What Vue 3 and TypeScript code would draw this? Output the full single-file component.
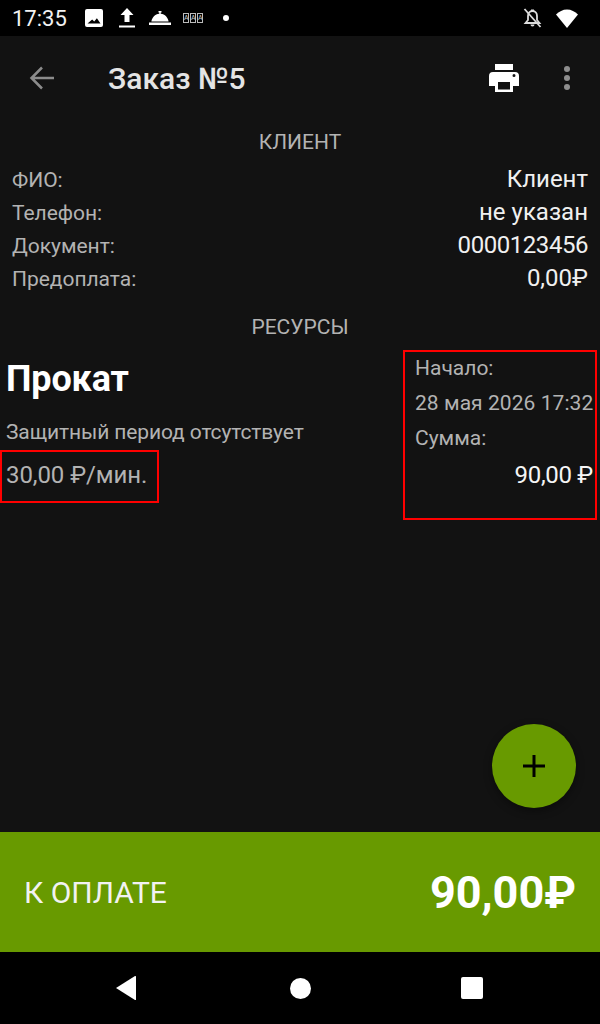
<script setup lang="ts">
const rows = [
  { label: 'ФИО:', value: 'Клиент', tight: false },
  { label: 'Телефон:', value: 'не указан', tight: false },
  { label: 'Документ:', value: '0000123456', tight: true },
  { label: 'Предоплата:', value: '0,00₽', tight: false },
]
</script>

<template>
  <div class="screen">
    <header class="status">
      <span class="clock">17:35</span>
      <div class="notif">
        <svg class="ic-img" width="18" height="18" viewBox="0 0 18 18"><path fill="#fff" fill-rule="evenodd" d="M2 0h14a2 2 0 0 1 2 2v14a2 2 0 0 1-2 2H2a2 2 0 0 1-2-2V2a2 2 0 0 1 2-2zM2.500 14.500h13l-3.600-5.200-2.700 3.300-2-2.200z"/></svg>
        <svg class="ic-up" width="16" height="20" viewBox="0 0 16 20"><path fill="#fff" d="M8 0l6.500 7H10.500v7h-5V7H1.500zM0 17.500h16v2H0z"/></svg>
        <svg class="ic-bell" width="22" height="14" viewBox="0 0 22 14"><path fill="#fff" d="M9.500 0h3v1.500h-.8v1.300c4.300.4 7.300 3.800 7.900 7.700H2.400c.6-3.900 3.600-7.300 7.900-7.700V1.500h-.8zM0 11.500h22V14H0z"/></svg>
        <span class="tofu"><i>A</i><i>A</i><i>A</i></span>
        <span class="dot"></span>
      </div>
      <div class="sys">
        <svg width="19" height="20" viewBox="0 0 19 20"><g fill="none" stroke="#ddd" stroke-width="1.800"><path d="M9.500 3c-3 0-4.500 2.500-4.500 5v4l-2.500 3h14l-2.500-3V8c0-2.500-1.500-5-4.500-5z"/><path d="M1.500 1 17.500 19"/></g><path fill="#ddd" d="M8 1.500h3V3.500H8zM7.500 16.500h4a2 2 0 0 1-4 0z"/></svg>
        <svg width="22" height="19" viewBox="0 0 22 19"><path fill="#fff" d="M11 19 0 5.500C3 2.500 6.800.5 11 .5s8 2 11 5z"/></svg>
      </div>
    </header>

    <div class="toolbar">
      <button class="icon-btn back" aria-label="Назад">
        <svg width="26" height="26" viewBox="0 0 26 26"><path fill="none" stroke="#8c8c8c" stroke-width="2.500" d="M25 13H3M13 2.500 2.500 13 13 23.500"/></svg>
      </button>
      <h1 class="title">Заказ №5</h1>
      <button class="icon-btn print" aria-label="Печать">
        <svg width="30" height="28" viewBox="0 0 30 28"><path fill="#fff" fill-rule="evenodd" d="M6 0h18v6H6zM4 8h22a4 4 0 0 1 4 4v10h-6v6H6v-6H0V12a4 4 0 0 1 4-4zm5 10v7.500h12V18zm16-8a1.500 1.500 0 1 0 0 3 1.500 1.500 0 0 0 0-3z"/></svg>
      </button>
      <button class="icon-btn more" aria-label="Меню">
        <span></span><span></span><span></span>
      </button>
    </div>

    <main class="content">
      <h2 class="section client-head">КЛИЕНТ</h2>
      <div class="rows">
        <div v-for="r in rows" :key="r.label" class="row">
          <span class="label">{{ r.label }}</span>
          <span class="value" :class="{ tight: r.tight }">{{ r.value }}</span>
        </div>
      </div>
      <h2 class="section res-head">РЕСУРСЫ</h2>

      <section class="resource">
        <div class="res-left">
          <div class="res-name">Прокат</div>
          <div class="res-note">Защитный период отсутствует</div>
          <div class="tariff">30,00 ₽/мин.</div>
        </div>
        <div class="res-right">
          <div class="r-line">Начало:</div>
          <div class="r-line">28 мая 2026 17:32</div>
          <div class="r-line">Сумма:</div>
          <div class="r-line sum">90,00 ₽</div>
        </div>
      </section>

      <button class="fab" aria-label="Добавить">
        <svg width="22" height="22" viewBox="0 0 22 22"><path fill="none" stroke="#000" stroke-width="3" d="M11 0v22M0 11h22"/></svg>
      </button>
    </main>

    <div class="pay">
      <span class="pay-label">К ОПЛАТЕ</span>
      <span class="pay-sum">90,00₽</span>
    </div>

    <nav class="navbar">
      <svg width="22" height="26" viewBox="0 0 22 26"><path fill="#fff" d="M21 1.500v23c0 .5-.4.7-1 .4L1 13 20 1.100c.6-.3 1-.1 1 .4z"/></svg>
      <span class="home"></span>
      <span class="recent"></span>
    </nav>
  </div>
</template>

<style>
html, body { margin: 0; background: #121212; }
</style>

<style scoped>
.screen {
  width: 600px;
  height: 1024px;
  display: flex;
  flex-direction: column;
  background: #121212;
  font-family: Roboto, "Liberation Sans", sans-serif;
  overflow: hidden;
}
.status {
  height: 36px;
  flex: none;
  background: #000;
  display: flex;
  align-items: center;
  padding: 0 12px;
  color: #fff;
}
.clock { font-size: 22px; color: #f2f2f2; width: 73px; }
.notif { display: flex; align-items: center; flex: 1; }
.notif svg { display: block; }
.ic-up { margin-left: 16px; }
.ic-bell { margin-left: 14px; }
.tofu { display: flex; gap: 1px; margin-left: 12px; }
.tofu i {
  width: 4px; height: 8px;
  border: 1px solid #bbb;
  font-size: 7px; line-height: 8px;
  font-style: normal; text-align: center; color: #ccc;
  overflow: hidden;
}
.dot { width: 6px; height: 6px; border-radius: 50%; background: #fff; margin-left: 20px; }
.sys { display: flex; align-items: center; gap: 13px; padding-right: 10px; }
.sys svg:first-child { margin-right: 1px; }

.toolbar {
  height: 84px;
  flex: none;
  display: flex;
  align-items: center;
}
.icon-btn { background: none; border: 0; padding: 0; display: flex; align-items: center; justify-content: center; }
.back { width: 26px; height: 26px; margin-left: 29px; }
.title { margin: 0 0 0 53px; font-size: 30px; font-weight: 500; flex: 1; color: #e4e4e4; }
.print { width: 30px; height: 28px; }
.more { flex-direction: column; gap: 3px; width: 8px; margin: 0 29px 0 44px; }
.more span { width: 6px; height: 6px; border-radius: 50%; background: #8e8e8e; }

.content { flex: 1; position: relative; display: flex; flex-direction: column; }
.section { margin: 0; font-size: 21px; font-weight: 400; text-align: center; color: #b3b3b3; line-height: 24px; }
.client-head { margin-top: 10px; }
.rows { margin: 9px 12px 0; height: 133px; display: grid; grid-template-rows: repeat(4, 1fr); }
.row { display: flex; justify-content: space-between; align-items: center; }
.label { font-size: 21px; color: #b3b3b3; letter-spacing: -.03px; }
.value { font-size: 24px; color: #f0f0f0; padding-bottom: 2px; }
.tight { letter-spacing: -.45px; }
.res-head { margin-top: 19px; }

.resource { display: flex; justify-content: space-between; align-items: flex-start; margin-top: 11px; }
.res-name { font-size: 36px; font-weight: 700; color: #fff; padding: 10px 6px 0; line-height: 38px; letter-spacing: -.15px; }
.res-note { font-size: 21px; color: #b3b3b3; padding: 0 6px; margin-top: 22px; line-height: 24px; letter-spacing: -.11px; }
.tariff {
  width: 159px; height: 53px; box-sizing: border-box;
  border: 2px solid #f00;
  margin-top: 6px;
  padding-left: 4px;
  font-size: 24px; line-height: 46px; color: #b3b3b3;
  letter-spacing: -.08px;
}
.res-right {
  width: 194px; height: 170px; box-sizing: border-box;
  border: 2px solid #f00;
  margin-right: 3px;
  padding: 0 2px 0 10px;
}
.r-line { font-size: 21px; color: #b3b3b3; height: 35px; line-height: 33px; white-space: nowrap; }
.r-line:nth-child(2) { letter-spacing: .06px; }
.sum { font-size: 24px; color: #f5f5f5; text-align: right; letter-spacing: -.3px; line-height: 36px; }

.fab {
  position: absolute; right: 24px; bottom: 24px;
  width: 84px; height: 84px; border-radius: 50%; border: 0;
  background: #689a00;
  box-shadow: 0 3px 8px rgba(0,0,0,.4);
  display: flex; align-items: center; justify-content: center;
}

.pay {
  height: 120px; flex: none; background: #689a00;
  display: flex; align-items: center; justify-content: space-between;
  padding: 0 24px;
  color: #fff;
}
.pay-label { font-size: 30px; color: #f2f2f2; }
.pay-sum { font-size: 45px; font-weight: 700; }

.navbar {
  height: 72px; flex: none; background: #000;
  display: flex; align-items: center;
  padding-left: 115px;
}
.home { width: 21px; height: 21px; border-radius: 50%; background: #fff; margin-left: 153px; }
.recent { width: 22px; height: 22px; border-radius: 2px; background: #fff; margin-left: 150px; }
</style>
